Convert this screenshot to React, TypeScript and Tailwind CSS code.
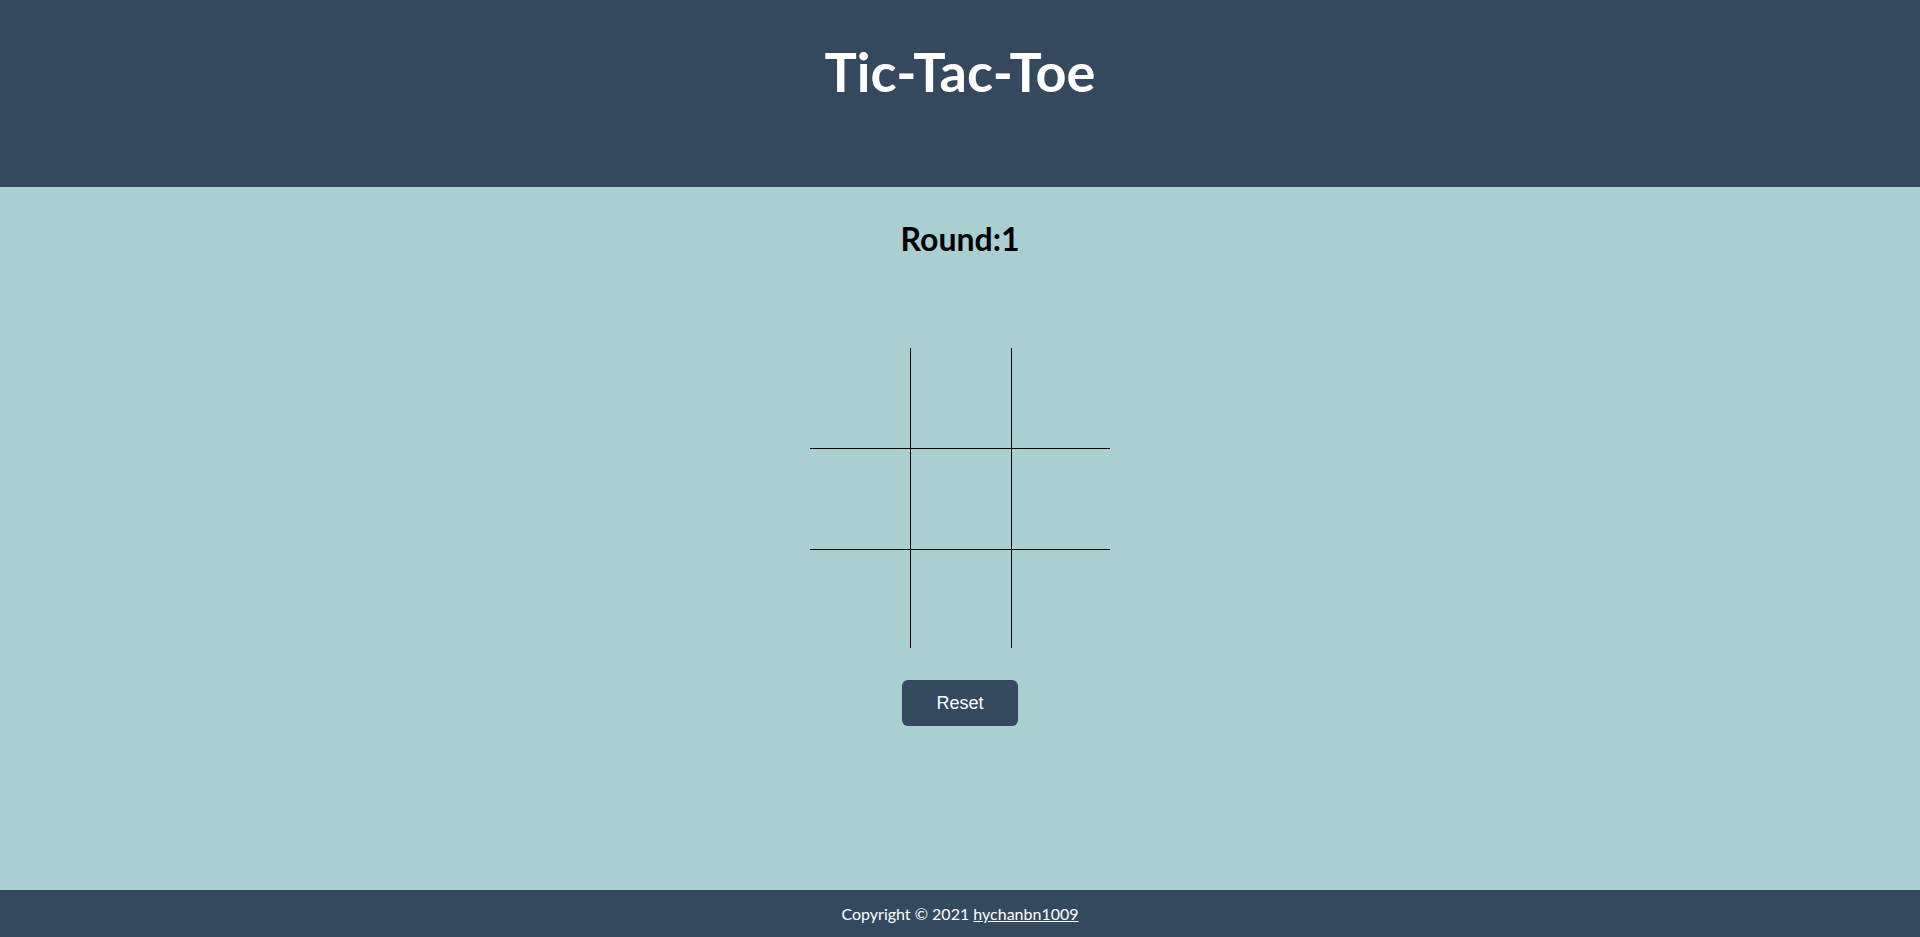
import React, { useState } from "react";

const App = () => {
  const [board, setBoard] = useState<string[]>(Array(9).fill(""));
  const [round] = useState(1);

  const cellBorder = (i: number) => {
    const classes = ["flex", "items-center", "justify-center", "text-5xl"];
    if (i % 3 !== 2) classes.push("border-r", "border-black");
    if (i < 6) classes.push("border-b", "border-black");
    return classes.join(" ");
  };

  return (
    <div className="min-h-screen flex flex-col bg-[#a9cfd1] font-['Lato',sans-serif]">
      {/* Header */}
      <header className="h-[187px] bg-[#34495e] flex justify-center">
        <h1 className="mt-[40px] text-[54px] leading-[1.2] font-bold text-white">
          Tic-Tac-Toe
        </h1>
      </header>

      {/* Game */}
      <main className="flex-1 flex flex-col items-center">
        <h2 className="pt-[33px] text-[32px] leading-[1.2] font-bold text-black">
          Round:{round}
        </h2>

        <div className="mt-[90px] grid grid-cols-[101px_101px_98px] grid-rows-[101px_101px_98px]">
          {board.map((v, i) => (
            <div
              key={i}
              className={cellBorder(i)}
              onClick={() => {
                const next = [...board];
                next[i] = "X";
                setBoard(next);
              }}
            >
              {v}
            </div>
          ))}
        </div>

        <button
          onClick={() => setBoard(Array(9).fill(""))}
          className="mt-[32px] w-[116px] h-[46px] rounded-md bg-[#34495e] text-white text-lg font-['Liberation_Sans',Arial,sans-serif]"
        >
          Reset
        </button>
      </main>

      {/* Footer */}
      <footer className="h-[47px] bg-[#34495e] flex items-center justify-center text-white text-base">
        <span>
          Copyright © 2021{" "}
          <a href="#" className="underline">
            hychanbn1009
          </a>
        </span>
      </footer>
    </div>
  );
};

export default App;
